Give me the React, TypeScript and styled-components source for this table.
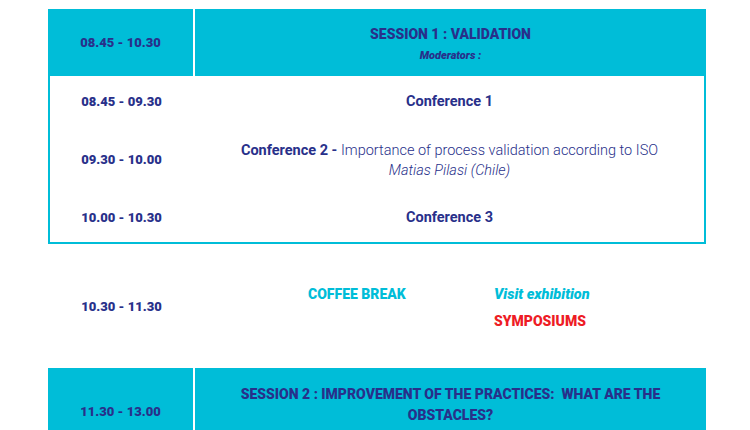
import styled, { createGlobalStyle } from "styled-components";

const colors = {
   cyan: "#00bdd8",
   navy: "#28308a",
   red: "#ee1c25",
   white: "#ffffff",
};

const GlobalStyle = createGlobalStyle`
   body {
      margin: 0;
      background: ${colors.white};
      font-family: Roboto, "Liberation Sans", sans-serif;
      color: ${colors.navy};
   }
`;

interface Talk {
   time: string;
   title: string;
   subtitle?: string;
   speaker?: string;
}

const talks: Talk[] = [
   { time: "08.45 - 09.30", title: "Conference 1" },
   {
      time: "09.30 - 10.00",
      title: "Conference 2 - ",
      subtitle: "Importance of process validation according to ISO",
      speaker: "Matias Pilasi (Chile)",
   },
   { time: "10.00 - 10.30", title: "Conference 3" },
];

export default function App() {
   return (
      <>
         <GlobalStyle />
         <Page>
            <Session>
               <SessionHeader>
                  <Time>08.45 - 10.30</Time>
                  <HeaderBody>
                     <SessionTitle>SESSION 1 : VALIDATION</SessionTitle>
                     <Moderators>Moderators :</Moderators>
                  </HeaderBody>
               </SessionHeader>
               <SessionBody>
                  {talks.map((talk) => (
                     <TalkRow key={talk.time} $tall={!!talk.speaker}>
                        <Time>{talk.time}</Time>
                        <TalkInfo $tall={!!talk.speaker}>
                           <div>
                              <strong>{talk.title}</strong>
                              {talk.subtitle && <Light>{talk.subtitle}</Light>}
                           </div>
                           {talk.speaker && <Speaker>{talk.speaker}</Speaker>}
                        </TalkInfo>
                     </TalkRow>
                  ))}
               </SessionBody>
            </Session>

            <BreakRow>
               <Time>10.30 - 11.30</Time>
               <BreakGrid>
                  <BreakLabel>COFFEE BREAK</BreakLabel>
                  <BreakLabel $italic>Visit exhibition</BreakLabel>
                  <span />
                  <BreakLabel $red>SYMPOSIUMS</BreakLabel>
               </BreakGrid>
            </BreakRow>

            <Session>
               <SessionHeader $tall>
                  <Time>11.30 - 13.00</Time>
                  <HeaderBody $tall>
                     <SessionTitle>
                        SESSION 2 : IMPROVEMENT OF THE PRACTICES:&nbsp; WHAT ARE THE
                        <br />
                        OBSTACLES?
                     </SessionTitle>
                  </HeaderBody>
               </SessionHeader>
            </Session>
         </Page>
      </>
   );
}

const Page = styled.div`
   width: 750px;
   height: 430px;
   overflow: hidden;
   padding: 9px 44px 0 48px;
   box-sizing: border-box;
`;

const Session = styled.section`
   width: 658px;
`;

const SessionHeader = styled.div<{ $tall?: boolean }>`
   display: grid;
   grid-template-columns: 147px 1fr;
   background-color: ${colors.cyan};
   height: ${({ $tall }) => ($tall ? "86px" : "67px")};

   & > :first-child {
      border-right: 2px solid ${colors.white};
   }
`;

const Time = styled.div`
   display: flex;
   align-items: center;
   justify-content: center;
   font-size: 13px;
   font-weight: 900;
   color: ${colors.navy};
`;

const HeaderBody = styled.div<{ $tall?: boolean }>`
   display: flex;
   flex-direction: column;
   align-items: center;
   justify-content: center;
   gap: 4px;
   text-align: center;
   padding-bottom: ${({ $tall }) => ($tall ? "13px" : "0")};
`;

const SessionTitle = styled.div`
   font-size: 14px;
   font-weight: 900;
   line-height: 21px;
   color: ${colors.navy};
`;

const Moderators = styled.div`
   font-size: 11px;
   font-weight: 900;
   font-style: italic;
`;

const SessionBody = styled.div`
   border: 2px solid ${colors.cyan};
   border-top: none;
`;

const TalkRow = styled.div<{ $tall: boolean }>`
   display: grid;
   grid-template-columns: 147px 1fr;
   height: ${({ $tall }) => ($tall ? "66px" : "50px")};
   margin-left: -2px;
`;

const TalkInfo = styled.div<{ $tall: boolean }>`
   display: flex;
   flex-direction: column;
   align-items: center;
   justify-content: center;
   gap: 3px;
   padding-top: ${({ $tall }) => ($tall ? "3px" : "0")};
   font-size: 14.5px;
   text-align: center;

   strong {
      font-weight: 700;
   }
`;

const Light = styled.span`
   font-weight: 300;
`;

const Speaker = styled.div`
   font-weight: 300;
   font-style: italic;
`;

const BreakRow = styled.div`
   display: grid;
   grid-template-columns: 147px 1fr;
   height: 124px;
   width: 658px;
`;

const BreakGrid = styled.div`
   display: grid;
   grid-template-columns: 186px auto;
   align-content: center;
   row-gap: 10px;
   padding-left: 113px;
   padding-top: 2px;
`;

const BreakLabel = styled.span<{ $italic?: boolean; $red?: boolean }>`
   font-size: ${({ $italic }) => ($italic ? "14.5px" : "14px")};
   font-weight: 900;
   font-style: ${({ $italic }) => ($italic ? "italic" : "normal")};
   color: ${({ $red }) => ($red ? colors.red : colors.cyan)};
`;
